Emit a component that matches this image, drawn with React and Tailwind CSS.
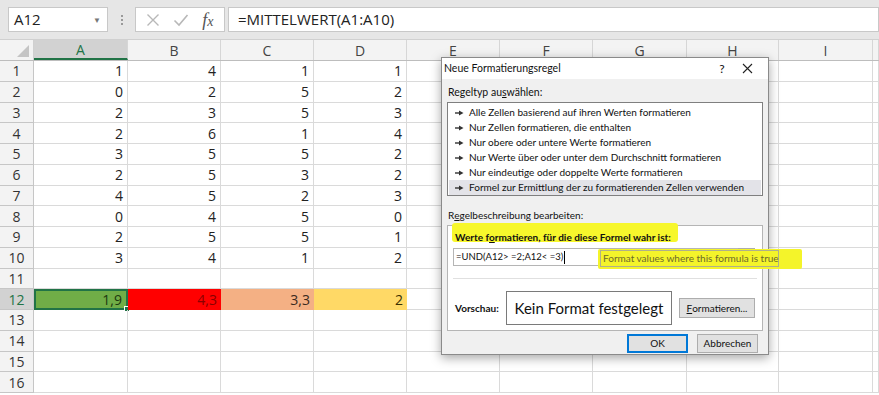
import React from 'react';

const cols = ['A', 'B', 'C', 'D', 'E', 'F', 'G', 'H', 'I', ''];
const widths = [94, 93, 93, 93, 93, 93, 94, 92, 94, 6];

const data = [
  ['1', '4', '1', '1'],
  ['0', '2', '5', '2'],
  ['2', '3', '5', '3'],
  ['2', '6', '1', '4'],
  ['3', '5', '5', '2'],
  ['2', '5', '3', '2'],
  ['4', '5', '2', '3'],
  ['0', '4', '5', '0'],
  ['2', '5', '5', '1'],
  ['3', '4', '1', '2'],
  [],
  ['1,9', '4,3', '3,3', '2'],
  [],
  [],
  [],
  [],
];

const row12 = [
  'bg-[#70ad47] text-[#1d3a10]',
  'bg-[#ff0000] text-[#8a0000]',
  'bg-[#f4b084] text-[#3a2a20]',
  'bg-[#ffd966] text-[#3a3000]',
];

const ruleTypes = [
  'Alle Zellen basierend auf ihren Werten formatieren',
  'Nur Zellen formatieren, die enthalten',
  'Nur obere oder untere Werte formatieren',
  'Nur Werte über oder unter dem Durchschnitt formatieren',
  'Nur eindeutige oder doppelte Werte formatieren',
  'Formel zur Ermittlung der zu formatierenden Zellen verwenden',
];

const Arrow = () => (
  <svg width="9" height="6" viewBox="0 0 9 6" className="shrink-0">
    <path d="M0 3h5" stroke="#333" strokeWidth="1.4" />
    <path d="M4 0.5L8.5 3L4 5.5z" fill="#333" />
  </svg>
);

const FormulaBar = () => (
  <div className="h-[40px] bg-[#e6e6e6] flex items-start pt-[7px] border-b border-[#d0d0d0]">
    <div className="ml-[8px] w-[100px] h-[25px] bg-white border border-[#c8c8c8] flex items-center justify-between pl-[5px] pr-[6px]">
      <span className="text-[15px] text-[#222]">A12</span>
      <span className="text-[8px] text-[#777]">▼</span>
    </div>
    <div className="w-[27px] h-[25px] flex flex-col items-center justify-center gap-[2px]">
      <span className="w-[2px] h-[2px] bg-[#999]" />
      <span className="w-[2px] h-[2px] bg-[#999]" />
      <span className="w-[2px] h-[2px] bg-[#999]" />
    </div>
    <div className="w-[90px] h-[25px] bg-white border border-[#c8c8c8] flex items-center justify-around px-[4px]">
      <svg width="14" height="14" viewBox="0 0 14 14">
        <path d="M1.5 1.5l11 11M12.5 1.5l-11 11" stroke="#b8b8b8" strokeWidth="1.4" />
      </svg>
      <svg width="16" height="14" viewBox="0 0 16 14">
        <path d="M1.5 7.5l4.5 4.5L14.5 2" stroke="#b8b8b8" strokeWidth="1.6" fill="none" />
      </svg>
      <span className="font-['Liberation_Serif'] italic text-[18px] text-[#555] leading-none">
        f<span className="text-[14px]">x</span>
      </span>
    </div>
    <div className="ml-[3px] flex-1 h-[25px] bg-white border border-[#c8c8c8] flex items-center pl-[9px]">
      <span className="text-[15px] text-[#222]">=MITTELWERT(A1:A10)</span>
    </div>
  </div>
);

const Grid = () => (
  <div className="font-['Open_Sans',sans-serif]">
    <div className="flex h-[21px] bg-[#f3f3f3] border-b border-[#bdbdbd]">
      <div className="w-[34px] shrink-0 border-r border-[#d0d0d0] flex items-end justify-end pr-[4px] pb-[3px]">
        <svg width="12" height="12" viewBox="0 0 12 12">
          <path d="M12 0V12H0z" fill="#c4c4c4" />
        </svg>
      </div>
      {cols.map((c, i) => (
        <div
          key={i}
          style={{ width: widths[i] }}
          className={`shrink-0 flex items-center justify-center text-[14px] border-r border-[#d6d6d6] ${
            c === 'A' ? 'bg-[#d2d2d2] text-[#217346] border-b-2 border-b-[#217346]' : 'text-[#444]'
          }`}
        >
          {c}
        </div>
      ))}
    </div>
    {data.map((row, r) => (
      <div key={r} className="flex h-[20.75px]">
        <div
          className={`w-[34px] shrink-0 flex items-center justify-center text-[14px] border-r border-b border-[#c6c6c6] ${
            r === 11 ? 'bg-[#d2d2d2] text-[#217346]' : 'bg-[#f3f3f3] text-[#333]'
          }`}
        >
          {r + 1}
        </div>
        {cols.map((c, i) => {
          const v = row[i];
          const isRow12 = r === 11 && i < 4;
          return (
            <div
              key={i}
              style={{ width: widths[i] }}
              className={`relative shrink-0 flex items-center justify-end pr-[4px] text-[14px] ${
                isRow12 ? row12[i] : 'text-[#222] border-r border-b border-[#dadada]'
              } ${r === 11 && i === 0 ? 'border-2 border-[#217346]' : ''}`}
            >
              {v}
              {r === 11 && i === 0 && (
                <span className="absolute -right-[4px] -bottom-[4px] w-[6px] h-[6px] bg-[#217346] border border-white" />
              )}
            </div>
          );
        })}
      </div>
    ))}
  </div>
);

const Dialog = () => (
  <div className="absolute left-[441px] top-[57px] w-[328px] h-[298px] bg-[#f0f0f0] border border-[#8a8a8a] shadow-[0_3px_10px_rgba(0,0,0,0.35)] font-['Lato',sans-serif] text-[10px] text-[#111] whitespace-nowrap flex flex-col">
    <div className="h-[21px] bg-white flex items-center pl-[2px] pr-[15px]">
      <span className="flex-1 text-[10.5px]">Neue Formatierungsregel</span>
      <span className="w-[34px] text-center text-[12px]">?</span>
      <svg width="11" height="11" viewBox="0 0 11 11" className="ml-[3px]">
        <path d="M1 1l9 9M10 1l-9 9" stroke="#222" strokeWidth="1.1" />
      </svg>
    </div>
    <div className="px-[5px] pt-[5px] flex flex-col">
      <div className="h-[17px] flex items-center pl-[1px] text-[10.5px]">
        Regeltyp au<span className="underline">s</span>wählen:
      </div>
      <div className="mt-[1px] h-[94px] bg-white border border-[#7f7f7f] p-[1px] pt-[2px] flex flex-col">
        {ruleTypes.map((t, i) => (
          <div
            key={i}
            className={`h-[15px] flex items-center gap-[5px] pl-[6px] ${i === 5 ? 'bg-[#e3e3e8]' : ''}`}
          >
            <Arrow />
            <span>{t}</span>
          </div>
        ))}
      </div>
      <div className="mt-[12px] h-[15px] flex items-center pl-[1px]">
        R<span className="underline">e</span>gelbeschreibung bearbeiten:
      </div>
      <div className="relative mt-[2px] h-[106px] bg-white border border-[#b5b5b5] flex flex-col px-[5px]">
        <div className="absolute left-[4px] -top-[3px] w-[226px] h-[19px] bg-[#f7f72c] rounded-[3px] blur-[0.5px]" />
        <div className="relative h-[22px] flex items-end pl-[2px] pb-[3px] font-bold">
          Werte f<span className="underline">o</span>rmatieren, für die diese Formel wahr ist:
        </div>
        <div className="flex items-start">
          <div className="w-[285px] h-[18px] border border-[#b5b5b5] flex items-center pl-[2px] text-[9.5px]">
            =UND(A12&gt; =2;A12&lt; =3)<span className="ml-[1px] w-[1px] h-[13px] bg-black" />
          </div>
          <div className="w-[17px] h-[13px] bg-[#e1e1e1] border border-[#acacac]" />
        </div>
        <div className="mt-[12px] h-[1px] bg-[#e0e0e0]" />
        <div className="flex items-center mt-[12px]">
          <span className="w-[53px] pl-[2px] font-bold">Vorschau:</span>
          <div className="w-[166px] h-[34px] border border-[#7a7a7a] flex items-center justify-center text-[15px] text-[#111]">
            Kein Format festgelegt
          </div>
          <div className="ml-[7px] w-[76px] h-[20px] bg-[#e1e1e1] border border-[#adadad] flex items-center justify-center">
            <span className="underline">F</span>ormatieren...
          </div>
        </div>
      </div>
      <div className="mt-[3px] flex justify-end gap-[9px] pr-[5px]">
        <div className="w-[61px] h-[19px] bg-[#e1e1e1] border-2 border-[#0078d7] flex items-center justify-center">
          OK
        </div>
        <div className="w-[61px] h-[19px] bg-[#e1e1e1] border border-[#adadad] flex items-center justify-center">
          Abbrechen
        </div>
      </div>
    </div>
  </div>
);

const Tooltip = () => (
  <div className="absolute left-[598px] top-[249px] w-[204px] h-[20px] whitespace-nowrap">
    <div className="absolute inset-0 bg-[#f4f42a] rounded-[2px] blur-[0.5px]" />
    <div className="absolute left-[2px] top-[1px] w-[179px] h-[17px] border border-[#b0b08a] flex items-center pl-[2px] font-['Lato',sans-serif] text-[10px] text-[#6b6a2a]">
      Format values where this formula is true
    </div>
  </div>
);

export default function App() {
  return (
    <div className="relative w-[879px] h-[395px] overflow-hidden bg-white font-['Open_Sans',sans-serif]">
      <FormulaBar />
      <Grid />
      <Dialog />
      <Tooltip />
    </div>
  );
}
